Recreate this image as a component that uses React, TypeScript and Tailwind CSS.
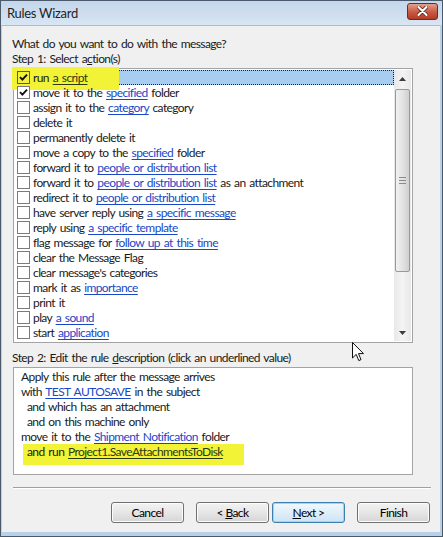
import React from 'react';

type Part = string | { link: string };

interface ActionRow {
    parts: Part[];
    checked?: boolean;
}

const actions: ActionRow[] = [
    { parts: ['run ', { link: 'a script' }], checked: true },
    { parts: ['move it to the ', { link: 'specified' }, ' folder'], checked: true },
    { parts: ['assign it to the ', { link: 'category' }, ' category'] },
    { parts: ['delete it'] },
    { parts: ['permanently delete it'] },
    { parts: ['move a copy to the ', { link: 'specified' }, ' folder'] },
    { parts: ['forward it to ', { link: 'people or distribution list' }] },
    { parts: ['forward it to ', { link: 'people or distribution list' }, ' as an attachment'] },
    { parts: ['redirect it to ', { link: 'people or distribution list' }] },
    { parts: ['have server reply using ', { link: 'a specific message' }] },
    { parts: ['reply using ', { link: 'a specific template' }] },
    { parts: ['flag message for ', { link: 'follow up at this time' }] },
    { parts: ['clear the Message Flag'] },
    { parts: ["clear message's categories"] },
    { parts: ['mark it as ', { link: 'importance' }] },
    { parts: ['print it'] },
    { parts: ['play ', { link: 'a sound' }] },
    { parts: ['start ', { link: 'application' }] },
];

function Checkbox({ checked, clear }: { checked?: boolean; clear?: boolean }) {
    return (
        <span
            className={`relative z-20 w-[13px] h-[13px] shrink-0 border flex items-center justify-center ${
                clear ? 'border-[#5e5e2a] bg-transparent' : 'border-[#7b7b7b] bg-white'
            }`}
        >
            {checked && (
                <svg width="9" height="9" viewBox="0 0 9 9">
                    <path d="M1 4.2 L3.4 6.6 L8 1.6" fill="none" stroke="#111" strokeWidth="1.9" />
                </svg>
            )}
        </span>
    );
}

function RowText({ parts, hilite }: { parts: Part[]; hilite?: boolean }) {
    return (
        <span className="relative z-20 whitespace-pre">
            {parts.map((p, i) =>
                typeof p === 'string' ? (
                    <span key={i}>{p}</span>
                ) : (
                    <span key={i} className={`underline underline-offset-[2px] ${hilite ? 'text-[#2c3a12]' : 'text-[#1848c8]'}`}>
                        {p.link}
                    </span>
                )
            )}
        </span>
    );
}

function ScrollBar() {
    return (
        <div className="w-[17px] h-full flex flex-col bg-gradient-to-r from-[#e8e8e8] via-[#f4f4f4] to-[#e8e8e8]">
            <div className="h-[17px] flex items-center justify-center">
                <svg width="7" height="4" viewBox="0 0 7 4"><path d="M0 4 L3.5 0 L7 4 Z" fill="#3c3c3c" /></svg>
            </div>
            <div className="mt-[2px] h-[183px] mx-[1px] rounded-[2px] border border-[#999] bg-gradient-to-r from-[#f1f1f1] via-[#e3e3e3] to-[#cfcfcf] flex flex-col items-center justify-center gap-[2px]">
                <span className="w-[7px] h-px bg-[#8a8a8a]" />
                <span className="w-[7px] h-px bg-[#8a8a8a]" />
                <span className="w-[7px] h-px bg-[#8a8a8a]" />
            </div>
            <div className="flex-1" />
            <div className="h-[17px] flex items-center justify-center">
                <svg width="7" height="4" viewBox="0 0 7 4"><path d="M0 0 L3.5 4 L7 0 Z" fill="#3c3c3c" /></svg>
            </div>
        </div>
    );
}

function Button({ children, focused }: { children: React.ReactNode; focused?: boolean }) {
    return (
        <button
            className={`w-[73px] h-[21px] rounded-[3px] border text-[12px] leading-none text-black ${
                focused
                    ? 'border-[#3c7fb1] bg-gradient-to-b from-[#f0f8fd] via-[#e0eef9] to-[#cde4f5] shadow-[inset_0_0_0_1px_#9fd4f5]'
                    : 'border-[#707070] bg-gradient-to-b from-[#f3f3f3] via-[#e6e6e6] to-[#d5d5d5] shadow-[inset_0_0_0_1px_#fcfcfc]'
            }`}
        >
            {children}
        </button>
    );
}

export default function App() {
    return (
        <div className="relative w-[443px] h-[537px] border border-[#4b5a6a] bg-[#b8d1ea] flex flex-col font-['Lato',sans-serif] text-[12px] leading-[15px] tracking-[-0.6px] [word-spacing:1.3px] text-[#1a1a1a] overflow-hidden">
            {/* Title bar */}
            <div className="h-[24px] shrink-0 flex items-center justify-between pl-[6px] pr-[4px] bg-gradient-to-b from-[#c3d6eb] to-[#d8e5f3]">
                <span className="text-[13px] tracking-[-0.3px] [word-spacing:0px] text-[#1e1e1e]">Rules Wizard</span>
                <div className="w-[31px] h-[17px] mb-[4px] rounded-[3px] border border-[#6e2a20] bg-gradient-to-b from-[#e3a08f] via-[#cb5c45] to-[#b13b26] flex items-center justify-center">
                    <svg width="11" height="10" viewBox="0 0 11 10">
                        <path d="M1.5 1 L9.5 9 M9.5 1 L1.5 9" stroke="#4a1a12" strokeWidth="3.6" strokeLinecap="round" />
                        <path d="M1.5 1 L9.5 9 M9.5 1 L1.5 9" stroke="#fff" strokeWidth="2.2" strokeLinecap="round" />
                    </svg>
                </div>
            </div>

            {/* Dialog body */}
            <div className="flex-1 ml-[1px] mr-[2px] mb-[4px] bg-[#f0f0f0] border-t border-[#a9bcd1] flex flex-col pl-[10px] pr-[10px] pt-[10px]">
                <div>What do you want to do with the message?</div>
                <div>
                    Step 1: Select a<span className="underline">c</span>tion(s)
                </div>

                {/* Action list */}
                <div className="mt-[2px] ml-[1px] w-[400px] h-[275px] border border-[#a3a3a3] bg-white flex p-[1px]">
                    <div className="flex-1 flex flex-col pl-[1px]">
                        {actions.map((a, i) => (
                            <div
                                key={i}
                                className={`h-[15px] flex items-center gap-[3px] pl-[1px] ${
                                    i === 0 ? 'bg-[#a9cdf1] outline-1 outline-dotted outline-[#222] -outline-offset-1' : ''
                                }`}
                            >
                                <Checkbox checked={a.checked} clear={i === 0} />
                                <RowText parts={a.parts} hilite={i === 0} />
                            </div>
                        ))}
                    </div>
                    <ScrollBar />
                </div>

                <div className="mt-[7px]">
                    Step 2: Edit the rule <span className="underline">d</span>escription (click an underlined value)
                </div>

                {/* Rule description */}
                <div className="mt-[2px] ml-[1px] w-[400px] h-[108px] border border-[#a3a3a3] bg-white pl-[7px] pt-[1px]">
                    <div>Apply this rule after the message arrives</div>
                    <div>
                        with <RowText parts={[{ link: 'TEST AUTOSAVE' }]} /> in the subject
                    </div>
                    <div className="pl-[6px]">and which has an attachment</div>
                    <div className="pl-[6px]">and on this machine only</div>
                    <div>
                        move it to the <RowText parts={[{ link: 'Shipment Notification' }]} /> folder
                    </div>
                    <div className="pl-[6px]">
                        <span className="relative z-20">and run </span>
                        <RowText parts={[{ link: 'Project1.SaveAttachmentsToDisk' }]} hilite />
                    </div>
                </div>

                <div className="mt-[12px] ml-[1px] mr-[-1px] h-[2px] border-t border-[#a0a0a0] border-b-white border-b" />

                <div className="mt-[13px] flex justify-end">
                    <div className="flex">
                        <Button>Cancel</Button>
                        <div className="w-[12px]" />
                        <Button>
                            &lt; <span className="underline">B</span>ack
                        </Button>
                        <div className="w-[3px]" />
                        <Button focused>
                            <span className="underline">N</span>ext &gt;
                        </Button>
                        <div className="w-[12px]" />
                        <Button>Finish</Button>
                    </div>
                </div>
            </div>

            {/* Highlighter marks */}
            <div className="absolute z-10 left-[11px] top-[66px] w-[107px] h-[23px] bg-[#f2f236]" />
            <div className="absolute z-10 left-[22px] top-[443px] w-[221px] h-[21px] bg-[#f2f236]" />

            {/* Mouse pointer */}
            <svg className="absolute z-30 left-[351px] top-[341px]" width="13" height="20" viewBox="0 0 13 20">
                <path d="M0.5 0.5 L0.5 16 L4.2 12.4 L6.8 18.6 L9 17.6 L6.5 11.6 L11.5 11.6 Z" fill="#fff" stroke="#111" strokeWidth="1" strokeLinejoin="round" />
            </svg>
        </div>
    );
}
